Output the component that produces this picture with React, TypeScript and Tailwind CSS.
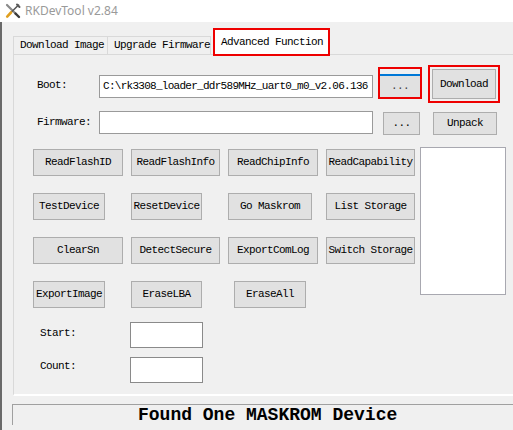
import React from 'react';

const mono = { fontFamily: '"Liberation Mono", "DejaVu Sans Mono", monospace' };

type Btn = { label: string; w: string };

// 4 rows of action buttons, columns start at x 33 / 131 / 228 / 326
const rows: Btn[][] = [
    [
        { label: 'ReadFlashID', w: 'w-[90px]' },
        { label: 'ReadFlashInfo', w: 'w-[89px]' },
        { label: 'ReadChipInfo', w: 'w-[90px]' },
        { label: 'ReadCapability', w: 'w-[89px]' },
    ],
    [
        { label: 'TestDevice', w: 'w-[72px]' },
        { label: 'ResetDevice', w: 'w-[71px]' },
        { label: 'Go Maskrom', w: 'w-[84px]' },
        { label: 'List Storage', w: 'w-[89px]' },
    ],
    [
        { label: 'ClearSn', w: 'w-[90px]' },
        { label: 'DetectSecure', w: 'w-[89px]' },
        { label: 'ExportComLog', w: 'w-[90px]' },
        { label: 'Switch Storage', w: 'w-[89px]' },
    ],
    [
        { label: 'ExportImage', w: 'w-[72px]' },
        { label: 'EraseLBA', w: 'w-[71px]' },
        { label: 'EraseAll', w: 'w-[72px] ml-[6px]' },
    ],
];
const colW = ['w-[98px]', 'w-[97px]', 'w-[98px]', 'w-[89px]'];

const WinButton: React.FC<{ label: string; className?: string }> = ({ label, className }) => (
    <div
        className={`flex items-center justify-center bg-[#e1e1e1] border border-[#adadad] text-[11px] tracking-[-0.6px] text-black whitespace-nowrap ${className ?? ''}`}
    >
        {label}
    </div>
);

const ToolIcon = () => (
    <svg width="16" height="16" viewBox="0 0 16 16">
        {/* wrench / screwdriver crossed */}
        <path d="M2 2 L11 11" stroke="#8a8a8a" strokeWidth="2.2" strokeLinecap="round" />
        <path d="M10.5 10.5 L14 14" stroke="#3b3b3b" strokeWidth="2.4" strokeLinecap="round" />
        <path d="M13.5 2 L6 9.5" stroke="#5a5a5a" strokeWidth="1.6" strokeLinecap="round" />
        <path d="M6 9.5 L2.2 13.6" stroke="#e0a020" strokeWidth="2.6" strokeLinecap="round" />
        <path d="M12 1.5 L14.5 4" stroke="#5a5a5a" strokeWidth="2" strokeLinecap="round" />
    </svg>
);

export default function App() {
    return (
        <div className="w-[513px] h-[430px] bg-[#f0f0f0] overflow-hidden flex flex-col" style={mono}>
            {/* ------- 타이틀 바 ------- */}
            <div className="h-[22px] bg-white flex items-center pl-[5px] shrink-0">
                <ToolIcon />
                <span
                    className="ml-[4px] text-[12px] text-[#9a9a9a]"
                    style={{ fontFamily: '"Noto Sans", "Open Sans", sans-serif' }}
                >
                    RKDevTool v2.84
                </span>
            </div>

            <div className="flex-1 border-l-2 border-[#6a6a6a] pl-[11px]">
                {/* ------- 탭 ------- */}
                <div className="mt-[6px] h-[26px] flex items-end whitespace-nowrap">
                    <div className="w-[94px] h-[18px] border-t border-l border-[#d9d9d9] bg-[#f0f0f0] text-[11px] tracking-[-0.6px] leading-[17px] pl-[6px] text-black">
                        Download Image
                    </div>
                    <div className="w-[104px] h-[18px] border-t border-l border-r border-[#d9d9d9] bg-[#f0f0f0] text-[11px] tracking-[-0.6px] leading-[17px] pl-[6px] text-black">
                        Upgrade Firmware
                    </div>
                    <div className="ml-[2px] w-[117px] h-[28px] -mb-[2px] relative z-10 border-2 border-[#ee0000] bg-white">
                        <div className="h-full text-[11px] tracking-[-0.6px] leading-[24px] pl-[6px] text-black">
                            Advanced Function
                        </div>
                    </div>
                </div>

                {/* ------- 탭 패널 ------- */}
                <div className="w-[520px] h-[342px] border-t border-l border-[#d9d9d9] border-b-2 border-b-white bg-[#f0f0f0] text-[11px] tracking-[-0.6px] text-black">
                    {/* Boot */}
                    <div className="mt-[10px] flex items-start">
                        <div className="ml-[23px] w-[62px] mt-[10px] h-[23px] leading-[21px]">Boot:</div>
                        <div className="mt-[10px] w-[274px] h-[23px] bg-white border border-[#9a9a9a] leading-[21px] pl-[3px] tracking-[-0.72px] whitespace-nowrap overflow-hidden">
                            C:\rk3308_loader_ddr589MHz_uart0_m0_v2.06.136
                        </div>
                        <div className="ml-[5px] mt-[2px] w-[44px] h-[32px] border-2 border-[#ee0000] flex flex-col">
                            <div className="mt-[5px] flex-1 bg-[#e1e1e1] border-t-2 border-[#0078d7] flex items-center justify-center text-[#444]">
                                ...
                            </div>
                        </div>
                        <div className="ml-[6px] w-[72px] h-[38px] border-2 border-[#ee0000] p-[2px] flex">
                            <WinButton label="Download" className="flex-1" />
                        </div>
                    </div>

                    {/* Firmware */}
                    <div className="mt-[8px] flex items-start">
                        <div className="ml-[23px] w-[62px] h-[23px] leading-[22px]">Firmware:</div>
                        <div className="w-[274px] h-[23px] bg-white border border-[#9a9a9a]" />
                        <WinButton label="..." className="ml-[10px] mt-[1px] w-[37px] h-[23px] text-[#444]" />
                        <WinButton label="Unpack" className="ml-[13px] mt-[1px] w-[64px] h-[23px]" />
                    </div>

                    {/* 기능 버튼 + 리스트 */}
                    <div className="mt-[12px] flex items-start">
                        <div className="ml-[19px] pt-[2px] flex flex-col gap-[17px]">
                            {rows.map((row, r) => (
                                <div key={r} className="flex">
                                    {row.map((b, c) => (
                                        <div key={b.label} className={colW[c]}>
                                            <WinButton label={b.label} className={`h-[27px] ${b.w}`} />
                                        </div>
                                    ))}
                                </div>
                            ))}
                        </div>
                        <div className="ml-[5px] w-[86px] h-[148px] bg-white border border-[#a8a8b0]" />
                    </div>

                    {/* Start / Count */}
                    <div className="mt-[14px] flex items-start">
                        <div className="ml-[26px] w-[90px] mt-[4px] leading-[14px]">Start:</div>
                        <div className="w-[73px] h-[26px] bg-white border border-[#8a8a8a]" />
                    </div>
                    <div className="mt-[9px] flex items-start">
                        <div className="ml-[26px] w-[90px] mt-[2px] leading-[14px]">Count:</div>
                        <div className="w-[73px] h-[26px] bg-white border border-[#8a8a8a]" />
                    </div>
                </div>

                {/* ------- 상태 바 ------- */}
                <div className="mt-[8px] -ml-px h-[21px] border-t border-l border-[#a0a0a0] bg-[#f0f0f0] pl-[125px] text-[18px] font-bold leading-[20px] text-black whitespace-nowrap">
                    Found One MASKROM Device
                </div>
            </div>
        </div>
    );
}
